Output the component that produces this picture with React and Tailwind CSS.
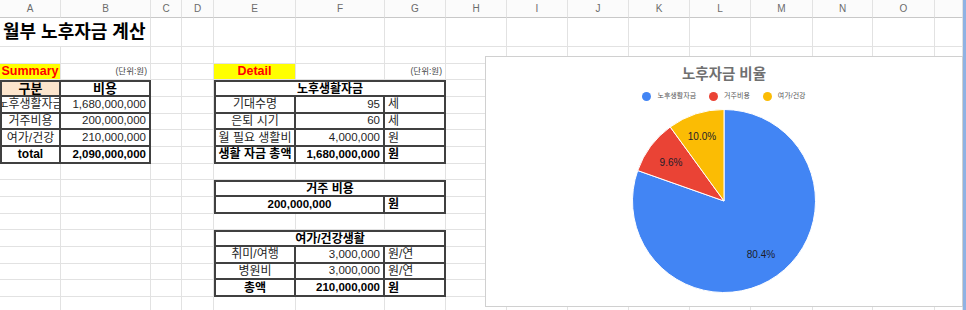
import React from 'react'
import clsx from 'clsx'

const HEADERS = ['A', 'B', 'C', 'D', 'E', 'F', 'G', 'H', 'I', 'J', 'K', 'L', 'M', 'N', 'O', '']

const E = {}
const unit = { text: '(단위:원)', align: 'right', size: 'text-[8.5px]', cls: 'text-[#444]' }
const tag = (text) => ({ text, bg: 'bg-[#ffff00]', size: 'text-[12.5px]', cls: 'font-bold text-[#ff0000]' })

const rows = [
    [{ text: '월부 노후자금 계산', span: 'col-span-2', align: 'left', size: 'text-[18px]', cls: 'font-bold text-black' }],
    [],
    [tag('Summary'), unit, E, E, tag('Detail'), E, unit],
    [
        { text: '구분', dark: true, t: true, l: true, bold: true, bg: 'bg-[#fce5cd]', size: 'text-[13px]' },
        { text: '비용', dark: true, t: true, bold: true, size: 'text-[13px]' },
        E, E,
        { text: '노후생활자금', span: 'col-span-3', dark: true, t: true, l: true, bold: true },
    ],
    [
        { text: '노후생활자금', dark: true, l: true },
        { text: '1,680,000,000', align: 'right', dark: true, num: true },
        E, E,
        { text: '기대수명', dark: true, l: true },
        { text: '95', align: 'right', dark: true, num: true },
        { text: '세', align: 'left', dark: true },
    ],
    [
        { text: '거주비용', dark: true, l: true },
        { text: '200,000,000', align: 'right', dark: true, num: true },
        E, E,
        { text: '은퇴 시기', dark: true, l: true },
        { text: '60', align: 'right', dark: true, num: true },
        { text: '세', align: 'left', dark: true },
    ],
    [
        { text: '여가/건강', dark: true, l: true },
        { text: '210,000,000', align: 'right', dark: true, num: true },
        E, E,
        { text: '월 필요 생활비', dark: true, l: true },
        { text: '4,000,000', align: 'right', dark: true, num: true },
        { text: '원', align: 'left', dark: true },
    ],
    [
        { text: 'total', dark: true, l: true, bold: true },
        { text: '2,090,000,000', align: 'right', dark: true, bold: true, num: true },
        E, E,
        { text: '생활 자금 총액', dark: true, l: true, bold: true },
        { text: '1,680,000,000', align: 'right', dark: true, bold: true, num: true },
        { text: '원', align: 'left', dark: true, bold: true },
    ],
    [],
    [E, E, E, E, { text: '거주 비용', span: 'col-span-3', dark: true, t: true, l: true, bold: true }],
    [
        E, E, E, E,
        { text: '200,000,000', span: 'col-span-2', dark: true, l: true, bold: true, num: true },
        { text: '원', align: 'left', dark: true, bold: true },
    ],
    [],
    [E, E, E, E, { text: '여가/건강생활', span: 'col-span-3', dark: true, t: true, l: true, bold: true }],
    [
        E, E, E, E,
        { text: '취미/여행', dark: true, l: true },
        { text: '3,000,000', align: 'right', dark: true, num: true },
        { text: '원/연', align: 'left', dark: true },
    ],
    [
        E, E, E, E,
        { text: '병원비', dark: true, l: true },
        { text: '3,000,000', align: 'right', dark: true, num: true },
        { text: '원/연', align: 'left', dark: true },
    ],
    [
        E, E, E, E,
        { text: '총액', dark: true, l: true, bold: true },
        { text: '210,000,000', align: 'right', dark: true, bold: true, num: true },
        { text: '원', align: 'left', dark: true, bold: true },
    ],
    [],
]

// pad every row out to the 16 columns of the sheet
const filled = rows.map((r) => {
    const used = r.reduce((n, c) => n + (c.span === 'col-span-3' ? 3 : c.span === 'col-span-2' ? 2 : 1), 0)
    return [...r, ...Array(16 - used).fill(E)]
})

const Cell = ({ c }) => {
    const alignCls = c.align === 'right' ? 'justify-end pr-[3px]' : c.align === 'left' ? 'justify-start pl-[3px]' : 'justify-center'
    const size = c.size || (c.num ? 'text-[11.5px]' : 'text-[12px]')
    return (
        <div
            className={clsx(
                'flex items-center overflow-hidden whitespace-nowrap',
                c.span,
                alignCls,
                size,
                c.bold ? 'font-bold text-black' : !c.cls && 'text-[#1f1f1f]',
                c.dark ? 'border-r-2 border-b-2 border-[#404040]' : 'border-r border-b border-[#e2e2e2]',
                c.t && 'border-t-2',
                c.l && 'border-l-2',
                c.bg,
                c.cls
            )}
        >
            {c.text}
        </div>
    )
}

const Legend = ({ color, label }) => (
    <div className="flex items-center gap-[6px]">
        <span className={clsx('w-[9px] h-[9px] rounded-full', color)} />
        <span className="text-[7px] text-[#555]">{label}</span>
    </div>
)

const PieChart = () => (
    <div className="absolute left-[485px] top-[56px] w-[478px] h-[251px] bg-white border border-[#d0d0d0] flex flex-col items-center">
        <div className="mt-[8px] text-[14.5px] leading-[18px] font-bold text-[#707070]">노후자금 비율</div>
        <div className="mt-[8px] flex items-center gap-[13px] h-[10px]">
            <Legend color="bg-[#4285f4]" label="노후생활자금" />
            <Legend color="bg-[#ea4335]" label="거주비용" />
            <Legend color="bg-[#fbbc04]" label="여가/건강" />
        </div>
        <svg width="184" height="184" viewBox="0 0 184 184" className="mt-[8px]">
            <path d="M92 92 L92 0.5 A91.5 91.5 0 1 1 5.72 61.55 Z" fill="#4285f4" stroke="#fff" strokeWidth="1" />
            <path d="M92 92 L5.72 61.55 A91.5 91.5 0 0 1 38.22 17.98 Z" fill="#ea4335" stroke="#fff" strokeWidth="1" />
            <path d="M92 92 L38.22 17.98 A91.5 91.5 0 0 1 92 0.5 Z" fill="#fbbc04" stroke="#fff" strokeWidth="1" />
            <g fontFamily="Liberation Sans, Arial, sans-serif" fontSize="10" fill="#1d1d2b" textAnchor="middle" dominantBaseline="central">
                <text x="129" y="145.5">80.4%</text>
                <text x="39" y="53">9.6%</text>
                <text x="70" y="27">10.0%</text>
            </g>
        </svg>
    </div>
)

const App = () => {
    return (
        <div className="w-[966px] h-[310px] overflow-hidden bg-white flex font-['Liberation_Sans','Noto_Sans_CJK_KR',sans-serif]">
            <div className="relative w-[963px] grid grid-cols-[61px_90px_31px_32px_82px_89px_61px_61px_61px_61px_61px_61px_62px_60px_62px_28px] grid-rows-[18px_29px_repeat(16,16.67px)]">
                {HEADERS.map((h, i) => (
                    <div key={i} className="flex items-center justify-center border-r border-b border-r-[#e2e2e2] border-b-[#c8c8c8] bg-[#fbfbfb] text-[10px] text-[#6b6b6b]">
                        {h}
                    </div>
                ))}
                {filled.map((r, ri) => r.map((c, ci) => <Cell key={ri + '-' + ci} c={c} />))}
                <PieChart />
            </div>
            <div className="w-[3px] h-full bg-[#8fb2e3]" />
        </div>
    )
}

export default App
